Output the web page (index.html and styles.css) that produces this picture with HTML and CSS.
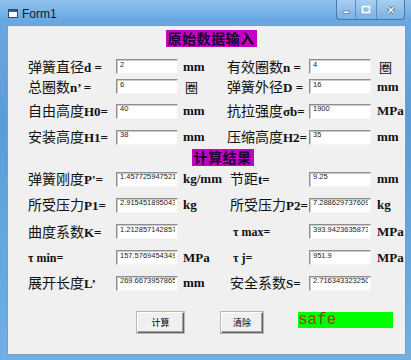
FILE: index.html
```html
<!DOCTYPE html>
<html lang="zh-CN">
<head>
    <meta charset="UTF-8">
    <meta name="viewport" content="width=device-width, initial-scale=1.0">
    <title>Form1</title>
    <link rel="stylesheet" href="styles.css">
</head>
<body>
    <div class="window">
        <div class="titlebar">
            <svg class="app-icon" width="10" height="9" viewBox="0 0 10 9">
                <rect x="0.5" y="0.5" width="9" height="8" fill="#ffffff" stroke="#2c4a6e"/>
                <rect x="1" y="1" width="8" height="2" fill="#2c5fa8"/>
            </svg>
            <span class="title">Form1</span>
            <div class="caption-btns">
                <span class="cbtn cbtn-min">
                    <svg width="10" height="10" viewBox="0 0 10 10"><rect x="2" y="6" width="6" height="2.5" fill="#fff" stroke="#3a5a80" stroke-width="0.6"/></svg>
                </span>
                <span class="cbtn cbtn-max">
                    <svg width="10" height="10" viewBox="0 0 10 10"><rect x="1.5" y="1.5" width="7" height="6" fill="none" stroke="#fff" stroke-width="1.6"/></svg>
                </span>
                <span class="cbtn cbtn-close">
                    <svg width="10" height="10" viewBox="0 0 10 10"><path d="M2 2 L8 8 M8 2 L2 8" stroke="#3a5a80" stroke-width="3"/><path d="M2 2 L8 8 M8 2 L2 8" stroke="#fff" stroke-width="1.6"/></svg>
                </span>
            </div>
        </div>

        <div class="client">
            <div class="heading"><span>原始数据输入</span></div>

            <div class="form-row first">
                <label>弹簧直径<span class="lat">d =</span></label>
                <input type="text" value="2">
                <span class="unit">mm</span>
                <label>有效圈数<span class="lat">n =</span></label>
                <input type="text" value="4">
                <span class="unit cjk">圈</span>
            </div>
            <div class="form-row tight">
                <label>总圈数<span class="lat">n’ =</span></label>
                <input type="text" value="6">
                <span class="unit cjk">圈</span>
                <label>弹簧外径<span class="lat">D =</span></label>
                <input type="text" value="16">
                <span class="unit">mm</span>
            </div>
            <div class="form-row">
                <label>自由高度<span class="lat">H0=</span></label>
                <input type="text" value="40">
                <span class="unit">mm</span>
                <label>抗拉强度<span class="lat">σb=</span></label>
                <input type="text" value="1900">
                <span class="unit">MPa</span>
            </div>
            <div class="form-row">
                <label>安装高度<span class="lat">H1=</span></label>
                <input type="text" value="38">
                <span class="unit">mm</span>
                <label>压缩高度<span class="lat">H2=</span></label>
                <input type="text" value="35">
                <span class="unit">mm</span>
            </div>

            <div class="heading second"><span>计算结果</span></div>

            <div class="form-row result tight">
                <label>弹簧刚度<span class="lat">P'=</span></label>
                <input type="text" value="1.45772594752187" readonly>
                <span class="unit">kg/mm</span>
                <label class="right">节距<span class="lat">t=</span></label>
                <input type="text" value="9.25" readonly>
                <span class="unit">mm</span>
            </div>
            <div class="form-row result">
                <label>所受压力<span class="lat">P1=</span></label>
                <input type="text" value="2.91545189504373" readonly>
                <span class="unit">kg</span>
                <label class="right">所受压力<span class="lat">P2=</span></label>
                <input type="text" value="7.28862973760933" readonly>
                <span class="unit">kg</span>
            </div>
            <div class="form-row result">
                <label>曲度系数<span class="lat">K=</span></label>
                <input type="text" value="1.21285714285714" readonly>
                <span class="unit"></span>
                <label class="right tau"><span class="lat">τ max=</span></label>
                <input type="text" value="393.942363587361" readonly>
                <span class="unit">MPa</span>
            </div>
            <div class="form-row result">
                <label class="tau"><span class="lat">τ min=</span></label>
                <input type="text" value="157.576945434944" readonly>
                <span class="unit">MPa</span>
                <label class="right tau"><span class="lat">τ j=</span></label>
                <input type="text" value="951.9" readonly>
                <span class="unit">MPa</span>
            </div>
            <div class="form-row result">
                <label>展开长度<span class="lat">L’</span></label>
                <input type="text" value="269.667395786510" readonly>
                <span class="unit">mm</span>
                <label class="right">安全系数<span class="lat">S=</span></label>
                <input type="text" value="2.71634332325087" readonly>
                <span class="unit"></span>
            </div>

            <div class="actions">
                <button type="button" class="btn-calc">计算</button>
                <button type="button" class="btn-clear">清除</button>
                <div class="status">safe</div>
            </div>
        </div>
    </div>
</body>
</html>
```

FILE: styles.css
```css
/* Base */
body {
    margin: 0;
    font-family: "Noto Sans CJK SC", sans-serif;
    background-color: #5e9edd;
}

.window {
    width: 411px;
    height: 360px;
    box-sizing: border-box;
    padding: 0 5px 5px 7px;
    background: linear-gradient(to bottom, #8ec3ee 0, #6aa8e2 20px, #5b9bdb 120px, #6fb0e6 100%);
}

/* Title bar */
.titlebar {
    height: 25px;
    display: flex;
    align-items: center;
    position: relative;
}

.app-icon {
    margin: 2px 4px 0 1px;
}

.title {
    font-family: "Liberation Sans", sans-serif;
    font-size: 12px;
    color: #0b1a2c;
    margin-top: 2px;
}

.caption-btns {
    position: absolute;
    top: 0;
    right: 1px;
    display: flex;
    height: 19px;
    border: 1px solid #4a78a8;
    border-top: none;
    border-radius: 0 0 4px 4px;
    background: linear-gradient(to bottom, #a9d0f2, #78afe3);
    overflow: hidden;
}

.cbtn {
    display: flex;
    align-items: center;
    justify-content: center;
    height: 100%;
    border-right: 1px solid #5d8cc0;
}

.cbtn-min { width: 18px; }
.cbtn-max { width: 20px; }
.cbtn-close { width: 27px; border-right: none; }

/* Client area */
.client {
    height: 330px;
    box-sizing: border-box;
    background-color: #f0f0f0;
    border: 1px solid #7f9db9;
    padding: 4px 0 0 20px;
}

.heading {
    display: flex;
    justify-content: center;
    padding-right: 11px;
    height: 17px;
}

.heading span {
    display: block;
    background-color: #c400c4;
    color: #1a0030;
    font-size: 14px;
    font-weight: bold;
    line-height: 17px;
    padding: 0 2px;
    letter-spacing: 0.5px;
}

.heading.second {
    margin-top: 5px;
    padding-right: 0;
    padding-left: 12px;
}

.form-row {
    display: grid;
    grid-template-columns: 88px 62px 49px 82px 63px auto;
    align-items: center;
    height: 15px;
    margin-top: 11px;
}

.form-row.first {
    margin-top: 10px;
}

.form-row.tight {
    margin-top: 5px;
}

label {
    font-size: 14px;
    color: #111;
    line-height: 15px;
    white-space: nowrap;
}

.lat {
    font-family: "Liberation Serif", serif;
    font-weight: bold;
    font-size: 13px;
}

label.tau .lat {
    font-size: 12px;
}

label.right {
    padding-left: 3px;
}

label.right.tau {
    padding-left: 6px;
}

input[type="text"] {
    width: 62px;
    height: 15px;
    box-sizing: border-box;
    margin: 0;
    padding: 0 2px 5px 3px;
    font-family: "Liberation Sans", sans-serif;
    font-size: 7.5px;
    color: #222;
    background-color: #fff;
    border: 1px solid;
    border-color: #8e8e8e #f4f4f4 #f4f4f4 #8e8e8e;
    box-shadow: inset 1px 1px 0 #c9c9c9;
    outline: none;
}

.unit {
    padding-left: 5px;
    font-family: "Liberation Serif", serif;
    font-weight: bold;
    font-size: 13px;
    color: #111;
    white-space: nowrap;
}

.unit.cjk {
    font-family: "Noto Sans CJK SC", sans-serif;
    font-weight: normal;
    padding-left: 7px;
}

/* Buttons row */
.actions {
    display: flex;
    align-items: flex-start;
    margin-top: 22px;
    padding-left: 109px;
}

button {
    height: 21px;
    box-sizing: border-box;
    font-family: "Noto Sans CJK SC", sans-serif;
    font-size: 9px;
    color: #000;
    background-color: #f0f0f0;
    border: 1px solid;
    border-color: #fff #646464 #646464 #fff;
    box-shadow: inset -1px -1px 0 #a0a0a0, 0 0 0 1px #b8b8b8;
    padding: 0;
    cursor: pointer;
}

.btn-calc {
    width: 47px;
}

.btn-clear {
    width: 42px;
    margin-left: 37px;
}

.status {
    width: 95px;
    height: 16px;
    margin-left: 35px;
    background-color: #00ff00;
    color: #a8380a;
    font-family: "Liberation Mono", monospace;
    font-size: 16px;
    line-height: 16px;
}
```
